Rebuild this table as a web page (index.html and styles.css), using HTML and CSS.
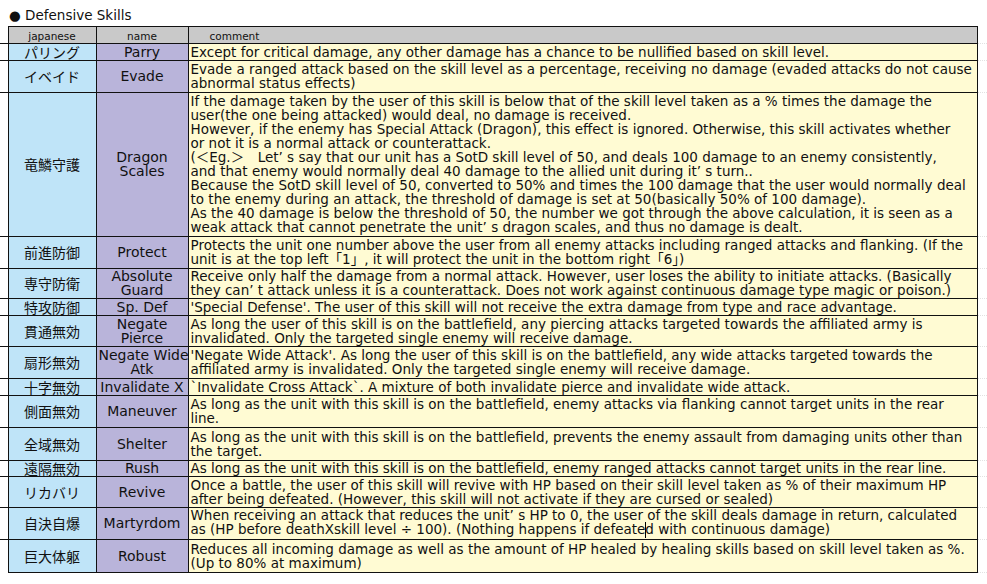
FILE: index.html
```html
<!DOCTYPE html>
<html>
<head>
<meta charset="utf-8">
<link rel="stylesheet" href="styles.css">
</head>
<body>
<div class="title">● Defensive Skills</div>
<table class="skills">
<colgroup><col class="cg"><col class="c1"><col class="c2"><col class="c3"><col class="cr"></colgroup>
<thead>
<tr class="h17"><th class="g"></th><th>japanese</th><th>name</th><th class="hc">comment</th><th class="gr"></th></tr>
</thead>
<tbody>
<tr class="h17"><td class="g"></td><td class="jp">パリング</td><td class="nm">Parry</td><td class="cm">Except for critical damage, any other damage has a chance to be nullified based on skill level.</td><td class="gr"></td></tr>
<tr class="h32"><td class="g"></td><td class="jp">イベイド</td><td class="nm">Evade</td><td class="cm">Evade a ranged attack based on the skill level as a percentage, receiving no damage (evaded attacks do not cause<br>abnormal status effects)</td><td class="gr"></td></tr>
<tr class="h144"><td class="g"></td><td class="jp">竜鱗守護</td><td class="nm">Dragon<br>Scales</td><td class="cm">If the damage taken by the user of this skill is below that of the skill level taken as a % times the damage the<br>user(the one being attacked) would deal, no damage is received.<br>However, if the enemy has Special Attack (Dragon), this effect is ignored. Otherwise, this skill activates whether<br>or not it is a normal attack or counterattack.<br>(＜Eg.＞　Let’ s say that our unit has a SotD skill level of 50, and deals 100 damage to an enemy consistently,<br>and that enemy would normally deal 40 damage to the allied unit during it’ s turn..<br>Because the SotD skill level of 50, converted to 50% and times the 100 damage that the user would normally deal<br>to the enemy during an attack, the threshold of damage is set at 50(basically 50% of 100 damage).<br>As the 40 damage is below the threshold of 50, the number we got through the above calculation, it is seen as a<br>weak attack that cannot penetrate the unit’ s dragon scales, and thus no damage is dealt.</td><td class="gr"></td></tr>
<tr class="h32"><td class="g"></td><td class="jp">前進防御</td><td class="nm">Protect</td><td class="cm">Protects the unit one number above the user from all enemy attacks including ranged attacks and flanking. (If the<br>unit is at the top left「1」, it will protect the unit in the bottom right「6」)</td><td class="gr"></td></tr>
<tr class="h30"><td class="g"></td><td class="jp">専守防衛</td><td class="nm">Absolute<br>Guard</td><td class="cm">Receive only half the damage from a normal attack. However, user loses the ability to initiate attacks. (Basically<br>they can’ t attack unless it is a counterattack. Does not work against continuous damage type magic or poison.)</td><td class="gr"></td></tr>
<tr class="h17"><td class="g"></td><td class="jp">特攻防御</td><td class="nm">Sp. Def</td><td class="cm">'Special Defense'. The user of this skill will not receive the extra damage from type and race advantage.</td><td class="gr"></td></tr>
<tr class="h31"><td class="g"></td><td class="jp">貫通無効</td><td class="nm">Negate<br>Pierce</td><td class="cm">As long the user of this skill is on the battlefield, any piercing attacks targeted towards the affiliated army is<br>invalidated. Only the targeted single enemy will receive damage.</td><td class="gr"></td></tr>
<tr class="h32"><td class="g"></td><td class="jp">扇形無効</td><td class="nm">Negate Wide<br>Atk</td><td class="cm">'Negate Wide Attack'. As long the user of this skill is on the battlefield, any wide attacks targeted towards the<br>affiliated army is invalidated. Only the targeted single enemy will receive damage.</td><td class="gr"></td></tr>
<tr class="h17"><td class="g"></td><td class="jp">十字無効</td><td class="nm">Invalidate X</td><td class="cm">`Invalidate Cross Attack`. A mixture of both invalidate pierce and invalidate wide attack.</td><td class="gr"></td></tr>
<tr class="h32"><td class="g"></td><td class="jp">側面無効</td><td class="nm">Maneuver</td><td class="cm">As long as the unit with this skill is on the battlefield, enemy attacks via flanking cannot target units in the rear<br>line.</td><td class="gr"></td></tr>
<tr class="h33"><td class="g"></td><td class="jp">全域無効</td><td class="nm">Shelter</td><td class="cm">As long as the unit with this skill is on the battlefield, prevents the enemy assault from damaging units other than<br>the target.</td><td class="gr"></td></tr>
<tr class="h16"><td class="g"></td><td class="jp">遠隔無効</td><td class="nm">Rush</td><td class="cm">As long as the unit with this skill is on the battlefield, enemy ranged attacks cannot target units in the rear line.</td><td class="gr"></td></tr>
<tr class="h31"><td class="g"></td><td class="jp">リカバリ</td><td class="nm">Revive</td><td class="cm">Once a battle, the user of this skill will revive with HP based on their skill level taken as % of their maximum HP<br>after being defeated. (However, this skill will not activate if they are cursed or sealed)</td><td class="gr"></td></tr>
<tr class="h32"><td class="g"></td><td class="jp">自決自爆</td><td class="nm">Martyrdom</td><td class="cm">When receiving an attack that reduces the unit’ s HP to 0, the user of the skill deals damage in return, calculated<br>as (HP before deathXskill level ÷ 100). (Nothing happens if defeate<span class="caret"></span>d with continuous damage)</td><td class="gr"></td></tr>
<tr class="h33"><td class="g last"></td><td class="jp">巨大体躯</td><td class="nm">Robust</td><td class="cm">Reduces all incoming damage as well as the amount of HP healed by healing skills based on skill level taken as %.<br>(Up to 80% at maximum)</td><td class="gr last"></td></tr>
</tbody>
</table>
</body>
</html>
```
FILE: styles.css
```css
html, body {
  margin: 0;
  padding: 0;
  background: #ffffff;
}
body {
  padding: 7px 0 0 0;
  font-family: "DejaVu Sans", "Noto Sans CJK JP", sans-serif;
  color: #111;
}
.title {
  font-size: 13.5px;
  line-height: 16px;
  padding-left: 9px;
  height: 19px;
}
.skills {
  border-collapse: collapse;
  table-layout: fixed;
  width: 987px;
}
.cg { width: 8px; }
.c1 { width: 88px; }
.c2 { width: 92px; }
.c3 { width: 789px; }
.cr { width: 10px; }
.h16 { height: 16px; }
.h17 { height: 17px; }
.h30 { height: 30px; }
.h31 { height: 31px; }
.h32 { height: 32px; }
.h33 { height: 33px; }
.h144 { height: 144px; }
.skills th {
  background: #c9c9c9;
  border: 1px solid #111;
  font-weight: normal;
  font-size: 10.5px;
  line-height: 14px;
  padding: 1px 0 0 0;
  text-align: center;
}
.skills th.hc {
  text-align: left;
  padding-left: 21px;
}
.skills td {
  border: 1px solid #111;
  font-size: 13.5px;
  line-height: 14px;
  padding: 0 2px 1px 2px;
  vertical-align: middle;
  white-space: nowrap;
}
.skills .g,
.skills .gr {
  background: transparent;
  border-top: none;
  border-left: none;
  border-right: none;
  padding: 0;
}
.skills .g {
  border-bottom: 1px solid #111;
}
.skills .gr {
  border-bottom: 1px dotted #e2e2e2;
}
.skills th.g {
  border-top: none;
}
.skills .g.last {
  border-bottom: none;
}
.skills td.jp {
  background: #bfe4f8;
  text-align: center;
  font-family: "Noto Sans CJK JP", sans-serif;
  font-size: 14px;
}
.skills td.nm {
  background: #b9b4da;
  text-align: center;
  font-size: 14px;
}
.skills td.cm {
  background: #fffbd3;
  text-align: left;
  overflow: hidden;
}
.caret {
  display: inline-block;
  width: 1px;
  height: 16px;
  background: #000;
  vertical-align: -4px;
  margin: 0 -0.5px;
}
```
